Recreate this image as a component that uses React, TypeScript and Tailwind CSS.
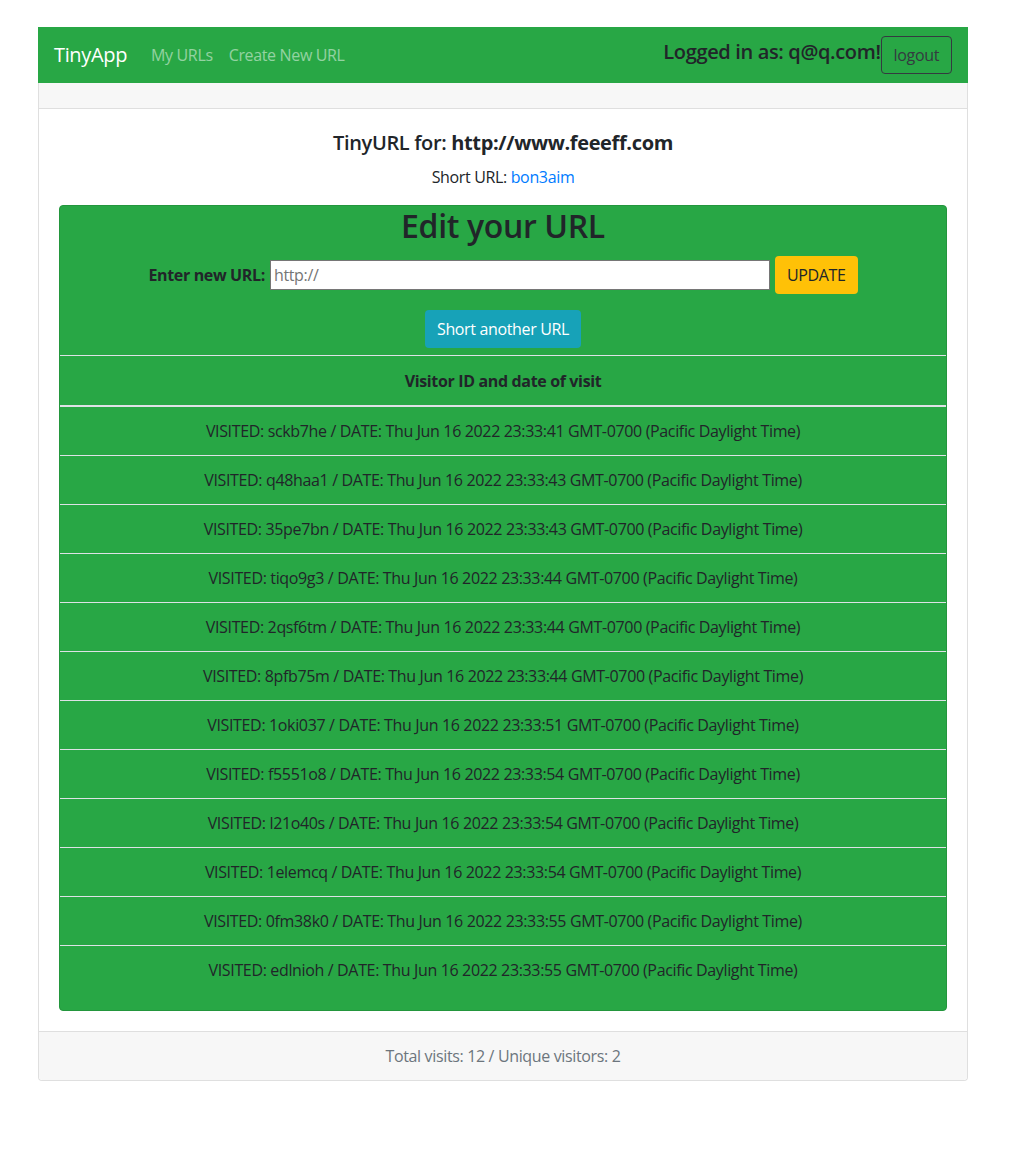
import React from "react";

const visits = [
  ["sckb7he", "23:33:41"],
  ["q48haa1", "23:33:43"],
  ["35pe7bn", "23:33:43"],
  ["tiqo9g3", "23:33:44"],
  ["2qsf6tm", "23:33:44"],
  ["8pfb75m", "23:33:44"],
  ["1oki037", "23:33:51"],
  ["f5551o8", "23:33:54"],
  ["l21o40s", "23:33:54"],
  ["1elemcq", "23:33:54"],
  ["0fm38k0", "23:33:55"],
  ["edlnioh", "23:33:55"],
];

export default function App() {
  return (
    <div
      className="min-h-[1175px] bg-white text-[#212529] text-[16px] leading-[24px] tracking-[-0.35px]"
      style={{ fontFamily: '"Open Sans", "Noto Sans", sans-serif' }}
    >
      <div className="pt-[27px] pl-[38px] w-[968px]">
        {/* Navbar */}
        <nav className="h-[56px] bg-[#28a745] flex items-center px-4">
          <span className="text-white text-[20px] leading-[30px] mr-4">TinyApp</span>
          <span className="px-2 text-white/50">My URLs</span>
          <span className="px-2 text-white/50">Create New URL</span>
          <div className="ml-auto flex items-center">
            <span className="text-[20px] leading-[24px] font-semibold text-[#212529] -mt-[6px]">
              Logged in as: q@q.com!
            </span>
            <button className="h-[38px] px-3 border border-[#343a40] rounded text-[#343a40] text-[16px]">
              logout
            </button>
          </div>
        </nav>

        {/* Card */}
        <div className="border border-[#dfdfdf] border-t-0 rounded-b">
          <div className="h-[26px] bg-[#f7f7f7] border-b border-[#dfdfdf]" />
          <div className="p-5">
            <div className="text-center text-[20px] leading-[28px] font-semibold mb-[8px]">
              TinyURL for: <b className="font-bold">http://www.feeeff.com</b>
            </div>
            <p className="text-center mb-4">
              Short URL: <a className="text-[#007bff]">bon3aim</a>
            </p>

            <div className="bg-[#28a745] border border-[#23963d] rounded pb-4">
              <h2 className="text-center text-[32px] leading-[40px] font-semibold">
                Edit your URL
              </h2>
              <div className="flex items-center justify-center mt-[10px]">
                <label className="font-bold mr-[5px]">Enter new URL:</label>
                <input
                  className="w-[500px] h-[30px] bg-white border border-[#767676] px-[3px] text-[16px] placeholder:text-[#757575] outline-none"
                  placeholder="http://"
                />
                <button className="ml-[5px] h-[38px] px-3 bg-[#ffc107] rounded text-[#212529]">
                  UPDATE
                </button>
              </div>
              <div className="flex justify-center mt-[16px] mb-[7px]">
                <button className="h-[38px] px-3 bg-[#17a2b8] rounded text-white">
                  Short another URL
                </button>
              </div>
              <div>
                <div className="border-t border-b-2 border-[#dee2e6] h-[52px] flex items-center justify-center font-bold">
                  Visitor ID and date of visit
                </div>
                {visits.map(([id, t], i) => (
                  <div
                    key={id}
                    className={
                      i === 0
                        ? "h-[48px] flex items-center justify-center"
                        : "h-[49px] border-t border-[#dee2e6] flex items-center justify-center"
                    }
                  >
                    VISITED: {id} / DATE: Thu Jun 16 2022 {t} GMT-0700 (Pacific Daylight Time)
                  </div>
                ))}
              </div>
            </div>
          </div>
          <div className="h-[49px] bg-[#f7f7f7] border-t border-[#dfdfdf] flex items-center justify-center text-[#6c757d] rounded-b">
            Total visits: 12 / Unique visitors: 2
          </div>
        </div>
      </div>
    </div>
  );
}
